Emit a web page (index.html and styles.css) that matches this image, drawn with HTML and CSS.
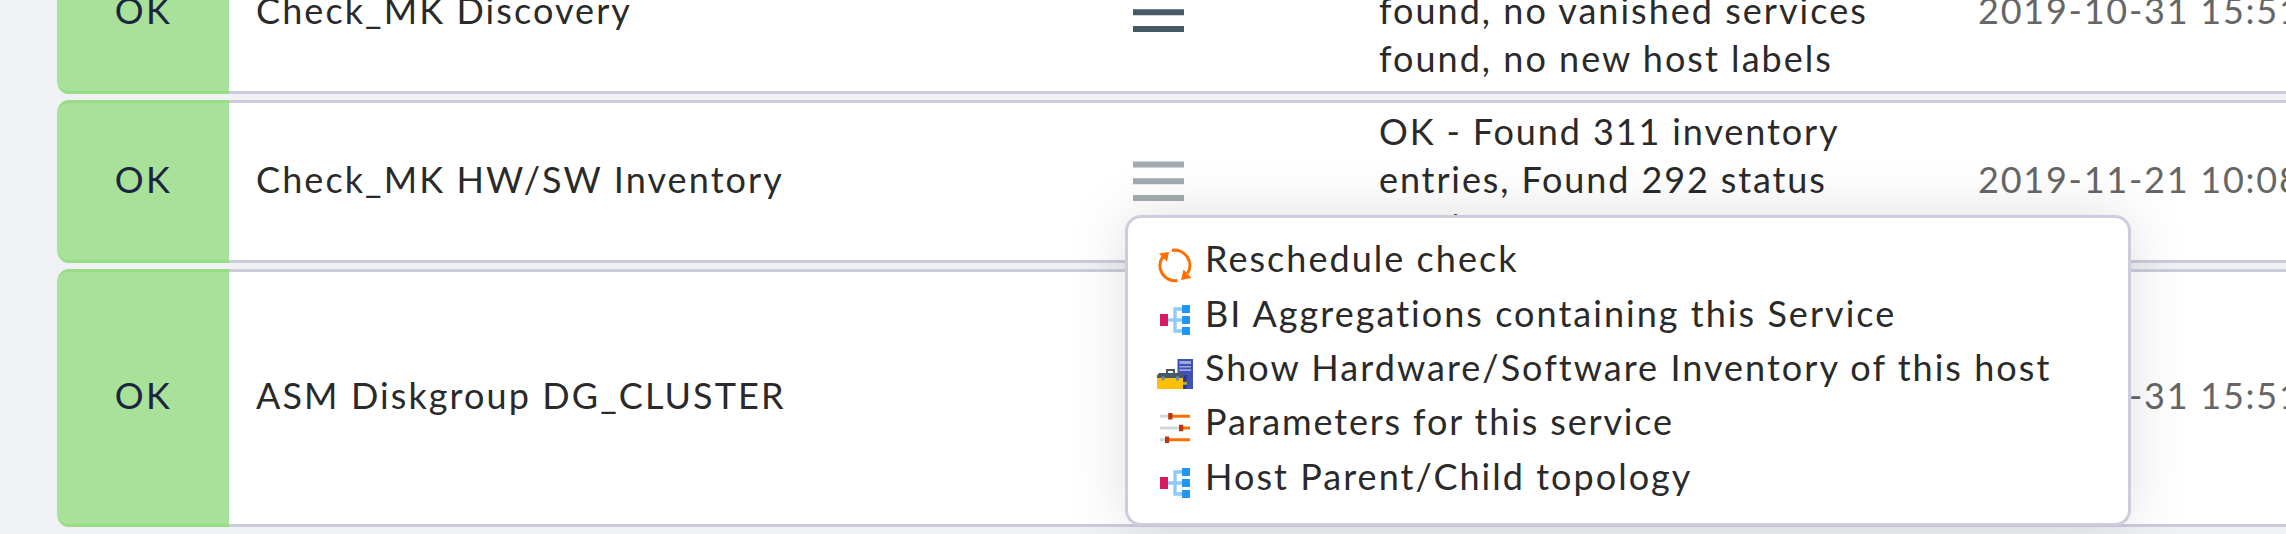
FILE: index.html
```html
<!DOCTYPE html>
<html lang="en">
<head>
<meta charset="utf-8">
<title>Services</title>
<link rel="stylesheet" href="styles.css">
</head>
<body>
<svg class="defs" width="0" height="0">
  <symbol id="bars" viewBox="0 0 51 41">
    <path d="M0 3.5H51M0 20.2H51M0 37H51" stroke="#455a64" stroke-width="6"/>
  </symbol>
  <symbol id="tree" viewBox="0 0 36 36">
    <path d="M11 18H25M25 7H18V29H25" fill="none" stroke="#90caf9" stroke-width="3.4"/>
    <path d="M3 12h8v12H3z" fill="#d81b60"/>
    <path d="M25 3h8v8h-8zM25 14h8v8h-8zM25 25h8v8h-8z" fill="#2196f3"/>
  </symbol>
</svg>
<main class="table">
  <section class="row">
    <div class="state">OK</div>
    <div class="name">Check_MK Discovery</div>
    <div class="actions"><svg class="bars"><use href="#bars"/></svg></div>
    <div class="detail loose">found, no vanished services<br>found, no new host labels</div>
    <div class="age">2019-10-31 15:51</div>
  </section>
  <section class="row">
    <div class="state">OK</div>
    <div class="name">Check_MK HW/SW Inventory</div>
    <div class="actions"><svg class="bars active"><use href="#bars"/></svg></div>
    <div class="detail">OK - Found 311 inventory<br>entries, Found 292 status<br>entries</div>
    <div class="age">2019-11-21 10:08</div>
  </section>
  <section class="row tall">
    <div class="state">OK</div>
    <div class="name">ASM Diskgroup DG_CLUSTER</div>
    <div class="actions"></div>
    <div class="detail"></div>
    <div class="age">2019-10-31 15:51</div>
  </section>
</main>
<nav class="menu">
  <a class="item"><svg class="icon" viewBox="0 0 36 36">
    <path d="M15 3.4A15.2 15.2 0 0 1 30.5 26.5M20.5 33.6A15.2 15.2 0 0 1 6 9.5" fill="none" stroke="#ff6f00" stroke-width="3.1"/>
    <path d="M2 6.5L12 5L10 14.8zM34.5 31L24 33L26.5 22.5z" fill="#ff6f00"/>
  </svg><span class="label">Reschedule check</span></a>
  <a class="item"><svg class="icon"><use href="#tree"/></svg><span class="label">BI Aggregations containing this Service</span></a>
  <a class="item"><svg class="icon" viewBox="0 0 36 36">
    <path d="M20.5 3H36V33H20.5z" fill="#3f51b5"/>
    <path d="M22.3 5H34v3H22.3zM22.3 10H34v1.4H22.3zM22.3 13.3H34v1.6H22.3z" fill="#9fa8da"/>
    <path d="M26 19h3.5v14H26z" fill="#283593"/>
    <path d="M26 25.8h4v3h-4z" fill="#afb42b"/>
    <path d="M0 21H26V33H0z" fill="#ffc107"/>
    <path d="M2 17H25L27 19.5V22H0V19.5z" fill="#455a64"/>
    <path d="M10 17V14H17V17" fill="none" stroke="#455a64" stroke-width="2"/>
    <path d="M4.5 20.5h3v4h-3zM19 20.5h3v4h-3z" fill="#78909c"/>
  </svg><span class="label">Show Hardware/Software Inventory of this host</span></a>
  <a class="item"><svg class="icon" viewBox="0 0 36 36">
    <path d="M3 6.3H13M3 18H24M3 29.7H10" stroke="#cfd8dc" stroke-width="3"/>
    <path d="M15 6.3H33M26 18H33M12 29.7H33" stroke="#ff6f00" stroke-width="3"/>
    <path d="M11.2 3h4.3v6.6h-4.3zM22 14.7h4.3v6.6H22zM8 26.4h4.2V33H8z" fill="#bf360c"/>
  </svg><span class="label tight">Parameters for this service</span></a>
  <a class="item"><svg class="icon"><use href="#tree"/></svg><span class="label">Host Parent/Child topology</span></a>
</nav>
</body>
</html>
```
FILE: styles.css
```css
html, body {
  margin: 0;
  height: 534px;
  overflow: hidden;
}

body {
  position: relative;
  background: #f0f1f4;
  color: #2a2a2a;
  font: 36px/48px Lato, sans-serif;
  letter-spacing: 1.88px;
  white-space: nowrap;
}

.defs {
  position: absolute;
}

.table {
  display: flex;
  flex-direction: column;
  gap: 6px;
  margin-top: -69px;
  padding-left: 57px;
}

.row {
  display: grid;
  grid-template-columns: 172px 904px 246px 599px 1fr;
  box-sizing: border-box;
  height: 163px;
  overflow: hidden;
  align-items: center;
  background: linear-gradient(#ccccdc, #ccccdc) top / 100% 3px no-repeat,
    linear-gradient(#ccccdc, #ccccdc) bottom / 100% 3px no-repeat, #fff;
  border-radius: 12px 0 0 12px;
}

.tall {
  height: 258px;
}

.state {
  box-sizing: border-box;
  display: flex;
  align-items: center;
  justify-content: center;
  height: 100%;
  padding: 0 0 6px 1px;
  background: #a8e199;
  border: solid #98dc84;
  border-width: 3px 0;
  border-radius: 12px 0 0 12px;
  color: #1c2540;
  letter-spacing: 2.4px;
}

.name {
  padding: 0 0 6px 27px;
  letter-spacing: 2.09px;
}

.bars {
  display: block;
  width: 51px;
  height: 41px;
}

.active {
  opacity: 0.5;
}

.detail {
  display: flex;
  flex-direction: column;
  justify-content: flex-end;
  height: 144px;
  padding-bottom: 6px;
}

.loose {
  letter-spacing: 2.02px;
}

.age {
  padding-bottom: 6px;
  color: #666;
  letter-spacing: 1.75px;
}

.menu {
  position: absolute;
  left: 1125px;
  top: 215px;
  box-sizing: border-box;
  width: 1006px;
  height: 311px;
  padding: 16px 0 0 29px;
  background: #fff;
  border: 3px solid #ccccdc;
  border-radius: 16px;
  box-shadow: 0 0 60px rgba(0, 0, 0, 0.13);
}

.item {
  display: flex;
  align-items: center;
  gap: 12px;
  height: 54.4px;
}

.label {
  padding-bottom: 6px;
  letter-spacing: 2.03px;
}

.tight {
  letter-spacing: 1.85px;
}

.icon {
  width: 36px;
  height: 36px;
  margin-top: 8px;
}
```
